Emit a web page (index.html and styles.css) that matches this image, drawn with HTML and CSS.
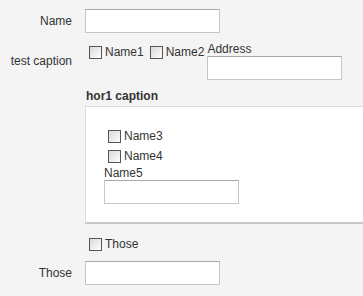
FILE: index.html
```html
<!DOCTYPE html>
<html lang="en">
<head>
    <meta charset="UTF-8">
    <title>Form Layout</title>
    <link rel="stylesheet" href="styles.css">
</head>
<body>
    <form class="form">
        <div class="row row-name">
            <label class="caption" for="name">Name</label>
            <input type="text" id="name" class="field">
        </div>
        <div class="row row-test">
            <span class="caption">test caption</span>
            <div class="controls">
                <label class="check"><input type="checkbox"><span>Name1</span></label>
                <label class="check"><input type="checkbox"><span>Name2</span></label>
                <div class="stack">
                    <label for="address">Address</label>
                    <input type="text" id="address" class="field">
                </div>
            </div>
        </div>
        <div class="group-wrap">
            <div class="group-title">hor1 caption</div>
            <div class="group">
                <label class="check check-row"><input type="checkbox"><span>Name3</span></label>
                <label class="check check-row"><input type="checkbox"><span>Name4</span></label>
                <div class="stack">
                    <label for="name5">Name5</label>
                    <input type="text" id="name5" class="field">
                </div>
            </div>
        </div>
        <div class="row row-those-check">
            <span class="caption"></span>
            <label class="check"><input type="checkbox"><span>Those</span></label>
        </div>
        <div class="row row-those">
            <label class="caption" for="those">Those</label>
            <input type="text" id="those" class="field">
        </div>
    </form>
</body>
</html>
```

FILE: styles.css
```css
html, body {
    margin: 0;
    padding: 0;
    background-color: #f4f4f4;
    overflow: hidden;
}
body {
    font-family: "Liberation Sans", Arial, sans-serif;
    font-size: 12px;
    color: #333;
    width: 363px;
    height: 296px;
}
.form {
    padding-top: 9px;
}
.row {
    display: flex;
    align-items: center;
    gap: 13px;
}
.caption {
    width: 72px;
    flex-shrink: 0;
    text-align: right;
}
.field {
    box-sizing: border-box;
    width: 135px;
    height: 24px;
    margin: 0;
    padding: 2px 4px;
    background-color: #fff;
    border: 1px solid #c6c6c6;
    border-top-color: #a9a9a9;
    font-family: inherit;
    font-size: 12px;
    outline: none;
}
.row-test {
    margin-top: 9px;
}
.controls {
    display: flex;
    align-items: flex-start;
}
.controls .stack {
    margin-left: 1px;
}
.stack {
    display: flex;
    flex-direction: column;
}
.stack label {
    line-height: 14px;
    height: 14px;
}
.check {
    display: flex;
    align-items: center;
    height: 16px;
    margin-left: 4px;
    margin-right: 2px;
}
.row-test .check {
    margin-top: 2px;
}
.check input {
    appearance: none;
    -webkit-appearance: none;
    box-sizing: border-box;
    width: 13px;
    height: 13px;
    margin: 0 3px 0 0;
    border: 1px solid #555;
    background: linear-gradient(135deg, #d8d8d8, #fff);
}
.check span {
    line-height: 16px;
}
.group-wrap {
    margin-top: 9px;
    margin-left: 85px;
}
.group-title {
    font-weight: bold;
    line-height: 14px;
    padding-left: 1px;
    margin-bottom: 3px;
}
.group {
    box-sizing: border-box;
    width: 278px;
    height: 118px;
    padding: 19px 0 0 18px;
    background-color: #fff;
    border: 1px solid #dcdcdc;
    border-bottom: 2px solid #c8c8c8;
    border-right: none;
}
.check-row {
    height: 20px;
}
.row-those-check {
    margin-top: 12px;
}
.row-those {
    margin-top: 9px;
}
```
